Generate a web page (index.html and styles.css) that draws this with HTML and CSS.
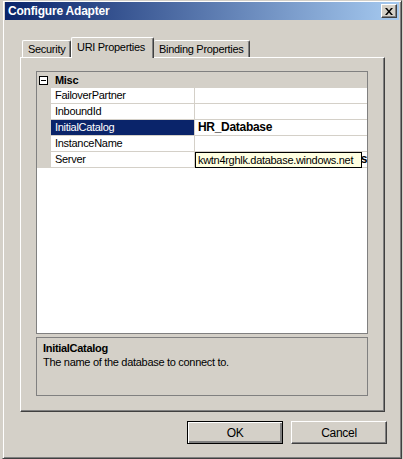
FILE: index.html
```html
<!DOCTYPE html>
<html lang="en">

<head>
    <meta charset="UTF-8">
    <title>Configure Adapter</title>
    <link rel="stylesheet" href="styles.css">
</head>

<body>
    <div class="window">
        <div class="titlebar">
            <span class="title">Configure Adapter</span>
            <span class="close-btn">
                <svg width="8" height="7" viewBox="0 0 8 7">
                    <path d="M0 0h2l2 2.5L6 0h2L5 3.5 8 7H6L4 4.5 2 7H0l3-3.5z" fill="#000"/>
                </svg>
            </span>
        </div>

        <div class="tabs">
            <div class="tab tab-security">Security</div>
            <div class="tab tab-selected">URI Properties</div>
            <div class="tab tab-binding">Binding Properties</div>
        </div>

        <div class="tab-panel">
            <div class="grid">
                <div class="category-row">
                    <span class="margin-col"><span class="minus-box"></span></span>
                    <span class="category-name">Misc</span>
                </div>
                <div class="prop-row">
                    <span class="margin-col"></span>
                    <span class="prop-name">FailoverPartner</span>
                    <span class="prop-value"></span>
                </div>
                <div class="prop-row">
                    <span class="margin-col"></span>
                    <span class="prop-name">InboundId</span>
                    <span class="prop-value"></span>
                </div>
                <div class="prop-row selected">
                    <span class="margin-col"></span>
                    <span class="prop-name">InitialCatalog</span>
                    <span class="prop-value bold">HR_Database</span>
                </div>
                <div class="prop-row">
                    <span class="margin-col"></span>
                    <span class="prop-name">InstanceName</span>
                    <span class="prop-value"></span>
                </div>
                <div class="prop-row">
                    <span class="margin-col"></span>
                    <span class="prop-name">Server</span>
                    <span class="prop-value bold server-value">s</span>
                    <span class="tooltip">kwtn4rghlk.database.windows.net</span>
                </div>
            </div>

            <div class="help-pane">
                <div class="help-title">InitialCatalog</div>
                <div class="help-desc">The name of the database to connect to.</div>
            </div>
        </div>

        <div class="buttons">
            <button class="btn btn-default">OK</button>
            <button class="btn">Cancel</button>
        </div>
    </div>
</body>

</html>
```

FILE: styles.css
```css
body {
    margin: 0;
    width: 403px;
    height: 459px;
    overflow: hidden;
    background-color: #d4d0c8;
    font-family: "Liberation Sans", Arial, sans-serif;
    font-size: 11px;
    letter-spacing: -0.3px;
    color: #000;
}

.window {
    box-sizing: border-box;
    width: 400px;
    height: 459px;
    margin-left: 2px;
    padding: 1px 2px 2px 2px;
    background-color: #d4d0c8;
    border: 1px solid;
    border-color: #d4d0c8 #404040 #404040 #d4d0c8;
    box-shadow: inset 1px 1px #fff, inset -1px -1px #808080;
}

.titlebar {
    height: 18px;
    display: flex;
    align-items: center;
    justify-content: space-between;
    padding: 0 2px 0 3px;
    background: linear-gradient(to right, #0a246a, #a6caf0);
    color: #fff;
}

.title {
    font-weight: bold;
    font-size: 12px;
    letter-spacing: -0.2px;
}

.close-btn {
    box-sizing: border-box;
    width: 16px;
    height: 14px;
    display: flex;
    align-items: center;
    justify-content: center;
    background-color: #d4d0c8;
    border: 1px solid;
    border-color: #fff #404040 #404040 #fff;
    box-shadow: inset -1px -1px #808080;
}

/* tabs */
.tabs {
    display: flex;
    align-items: flex-end;
    height: 20px;
    margin: 17px 0 0 17px;
}

.tab {
    box-sizing: border-box;
    height: 17px;
    padding: 2px 0 0 5px;
    background-color: #d4d0c8;
    border-top: 1px solid #fff;
    border-left: 1px solid #fff;
    border-right: 1px solid #404040;
    box-shadow: inset -1px 0 #808080;
    border-radius: 2px 2px 0 0;
}

.tab-security {
    width: 49px;
}

.tab-binding {
    width: 96px;
    border-left: none;
}

.tab-selected {
    width: 83px;
    height: 21px;
    margin-bottom: -1px;
    padding-top: 3px;
    position: relative;
    z-index: 1;
}

.tab-panel {
    box-sizing: border-box;
    width: 365px;
    height: 355px;
    margin-left: 15px;
    padding: 13px 15px 0 15px;
    border-top: 1px solid #fff;
    border-left: 1px solid #fff;
    border-right: 1px solid #404040;
    border-bottom: 1px solid #404040;
    box-shadow: inset -1px -1px #808080;
}

/* property grid */
.grid {
    box-sizing: border-box;
    width: 332px;
    height: 263px;
    border: 1px solid #808080;
    background-color: #fff;
}

.category-row,
.prop-row {
    display: flex;
    height: 16px;
    line-height: 15px;
    position: relative;
}

.category-row {
    background-color: #d4d0c8;
}

.margin-col {
    width: 14px;
    flex-shrink: 0;
    background-color: #d4d0c8;
}

.minus-box {
    display: block;
    box-sizing: border-box;
    width: 9px;
    height: 9px;
    margin: 4px 0 0 2px;
    border: 1px solid #000;
    background: linear-gradient(#000, #000) center / 5px 1px no-repeat #fff;
}

.category-name {
    font-weight: bold;
    padding-left: 4px;
    line-height: 17px;
}

.prop-name {
    box-sizing: border-box;
    width: 144px;
    padding-left: 4px;
    border-bottom: 1px solid #d4d0c8;
    border-right: 1px solid #d4d0c8;
    white-space: nowrap;
}

.prop-value {
    flex: 1;
    padding-left: 3px;
    border-bottom: 1px solid #d4d0c8;
    white-space: nowrap;
    overflow: hidden;
}

.bold {
    font-weight: bold;
    font-size: 12px;
}

.server-value {
    text-align: right;
    padding-right: 0;
}

.prop-row.selected .prop-name {
    background-color: #0a246a;
    color: #fff;
}

.tooltip {
    position: absolute;
    left: 158px;
    top: 0;
    box-sizing: border-box;
    width: 167px;
    height: 16px;
    padding-left: 2px;
    border: 1px solid #000;
    background-color: #ffffe1;
    line-height: 14px;
    white-space: nowrap;
}

/* help */
.help-pane {
    box-sizing: border-box;
    width: 332px;
    height: 59px;
    margin-top: 3px;
    padding: 3px 6px 0 6px;
    border: 1px solid #808080;
    line-height: 14px;
}

.help-title {
    font-weight: bold;
}

/* buttons */
.buttons {
    display: flex;
    justify-content: flex-end;
    gap: 8px;
    padding: 9px 12px 0 0;
}

.btn {
    box-sizing: border-box;
    width: 96px;
    height: 23px;
    padding: 0;
    font-family: inherit;
    font-size: 12px;
    letter-spacing: -0.3px;
    color: #000;
    background-color: #d4d0c8;
    border: 1px solid;
    border-color: #fff #404040 #404040 #fff;
    box-shadow: inset -1px -1px #808080;
}

.btn-default {
    border: 1px solid #000;
    box-shadow: inset 1px 1px #fff, inset -2px -2px #808080;
}
```
